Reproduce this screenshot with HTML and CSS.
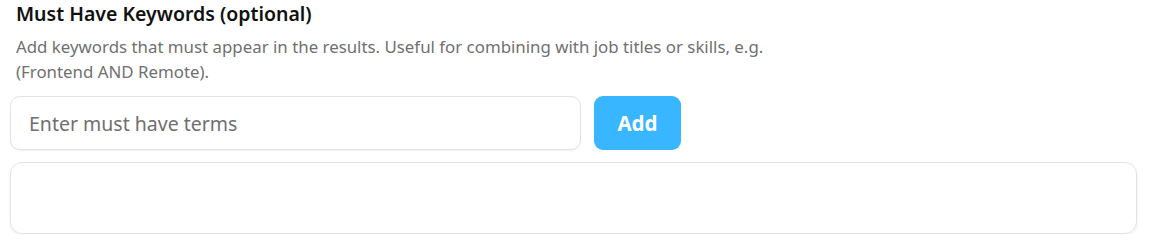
FILE: index.html
```html
<!DOCTYPE html>
<html>
<head lang="en">
    <meta charset="utf-8">
    <link rel="stylesheet" href="styles.css">
</head>
<body>

<div class="keywordSection">
    <div class="sectionHead">
        <h3 class="sectionTitle">Must Have Keywords (optional)</h3>
        <p class="sectionDesc">Add keywords that must appear in the results. Useful for combining with job titles or skills, e.g. (Frontend AND Remote).</p>
    </div>

    <div class="addRow">
        <input class="termInput" type="text" name="mustHave" id="mustHave" placeholder="Enter must have terms"/>
        <button class="addButton" type="button">Add</button>
    </div>

    <!-- added terms show up here -->
    <div class="termList" id="termList"></div>
</div>

</body>
</html>
```

FILE: styles.css
```css
body {
	margin: 0;
	background: #fff;
	font-family: "Noto Sans", "Open Sans", sans-serif;
}

.keywordSection {
	padding: 0 13px 0 10px;
	display: flex;
	flex-direction: column;
}

.sectionHead {
	padding-left: 6px;
	width: 765px;
}

.sectionTitle {
	margin: 2px 0 0 0;
	font-size: 19.5px;
	font-weight: 600;
	line-height: 24px;
	color: #111;
}

.sectionDesc {
	margin: 8px 0 0 0;
	font-size: 16.85px;
	line-height: 25px;
	color: #707070;
}

.addRow {
	display: flex;
	gap: 13px;
	margin-top: 12px;
}

.termInput {
	box-sizing: border-box;
	width: 571px;
	height: 54px;
	padding: 0 18px;
	border: 1px solid #e3e3e3;
	border-radius: 10px;
	box-shadow: 0 1px 2px rgba(0, 0, 0, 0.06);
	font-family: inherit;
	font-size: 19.5px;
	color: #333;
	outline: none;
}

.termInput::placeholder {
	color: #6f6f6f;
}

.addButton {
	width: 87px;
	height: 54px;
	border: none;
	border-radius: 9px;
	background: #38b6ff;
	color: #fff;
	font-family: inherit;
	font-size: 20.5px;
	font-weight: 700;
}

.termList {
	box-sizing: border-box;
	margin-top: 12px;
	height: 72px;
	border: 1px solid #e3e3e3;
	border-radius: 12px;
	box-shadow: 0 1px 3px rgba(0, 0, 0, 0.08);
}
```
